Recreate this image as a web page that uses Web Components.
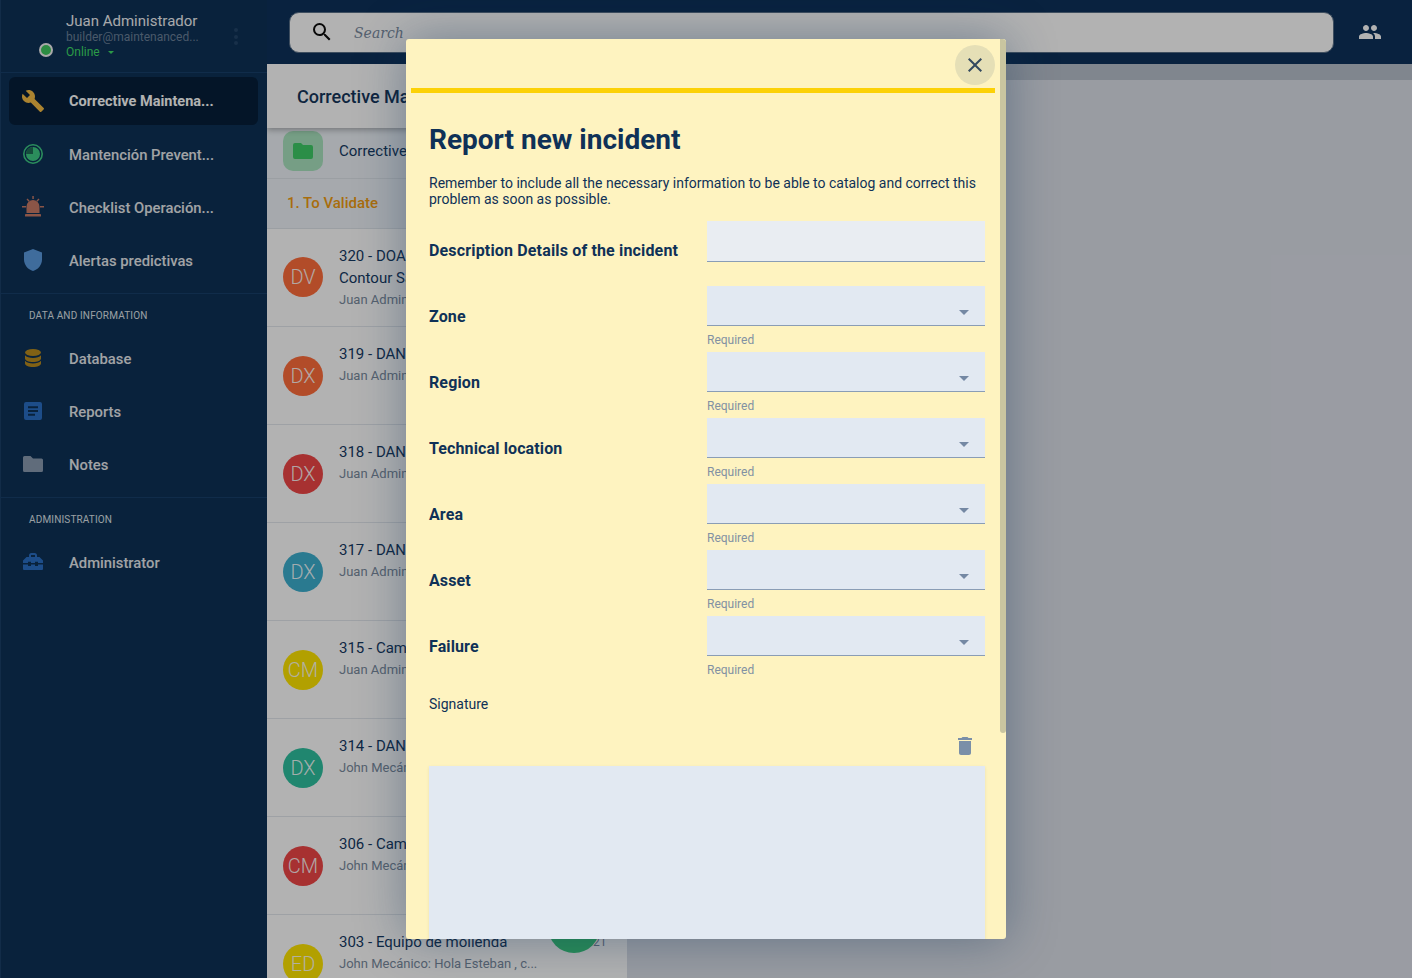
<!DOCTYPE html>
<html><head><meta charset="utf-8">
<style>
html,body{margin:0;height:100%;overflow:hidden;font-family:Roboto,sans-serif;background:#dce0e9}
</style></head><body>
<app-shell></app-shell>
<template id="nav-tpl"><style>
:host{display:flex;align-items:center;height:48px;margin:0 9px 5px 9px;border-radius:6px;padding-left:12px;color:#e7eaee;font:500 14.800px Roboto,sans-serif}
:host([active]){background:#061f3a;color:#fff;font:700 14.500px Roboto,sans-serif}
.i{width:24px;height:24px;flex:none;display:flex}
.t{margin-left:24px;margin-top:1px;white-space:nowrap}
::slotted(svg){width:24px;height:24px}
</style><span class="i"><slot name="icon"></slot></span><span class="t"><slot></slot></span></template>
<script>
const ICONS={
wrench:'<svg slot="icon" viewBox="0 0 24 24"><path fill="#f5bc45" d="M22.700 19l-9.100-9.100c.9-2.300.4-5-1.500-6.900-2-2-5-2.400-7.400-1.300L9 6 6 9 1.600 4.700C.4 7.100.9 10.100 2.900 12.100c1.900 1.900 4.600 2.400 6.900 1.500l9.100 9.100c.4.4 1 .4 1.400 0l2.300-2.300c.5-.4.5-1.100.1-1.400z"/></svg>',
clock:'<svg slot="icon" viewBox="0 0 24 24"><circle cx="12" cy="12" r="9.200" fill="none" stroke="#3ecb85" stroke-width="1.600"/><circle cx="12" cy="12" r="7" fill="#3ecb85"/><path fill="#1f6d55" d="M12 12V5A7 7 0 0 0 5 12z"/></svg>',
siren:'<svg slot="icon" viewBox="0 0 24 24"><g fill="#c87a66"><path d="M5.500 18v-6.500a6.500 6.500 0 0 1 13 0V18z"/><rect x="4" y="19" width="16" height="2.600" rx=".4"/><rect x="11.300" y="1" width="1.500" height="3"/><rect x="1" y="11" width="4" height="1.500"/><rect x="19" y="11" width="4" height="1.500"/><path d="M5.500 4.500l1-1 2.200 2.200-1 1zM18.500 4.500l-1-1-2.200 2.200 1 1z"/></g></svg>',
shield:'<svg slot="icon" viewBox="0 0 24 24"><path fill="#5b9be0" d="M12 1l9 3.400v7.100c0 5.300-3.800 10.100-9 11.500-5.200-1.400-9-6.200-9-11.500V4.400z"/></svg>',
db:'<svg slot="icon" viewBox="0 0 24 24"><g fill="#b98c1f"><ellipse cx="12" cy="6.500" rx="8" ry="3.500"/><path d="M4 9.300c1.400 1.700 4.700 2.700 8 2.700s6.600-1 8-2.700v3.200c0 1.900-3.600 3.500-8 3.500s-8-1.600-8-3.500z"/><path d="M4 14.800c1.400 1.700 4.700 2.700 8 2.700s6.600-1 8-2.700v2.700c0 1.900-3.600 3.500-8 3.500s-8-1.600-8-3.500z"/></g></svg>',
report:'<svg slot="icon" viewBox="0 0 24 24"><path fill-rule="evenodd" fill="#2a6fc4" d="M5 3h14a2 2 0 0 1 2 2v14a2 2 0 0 1-2 2H5a2 2 0 0 1-2-2V5a2 2 0 0 1 2-2zM7 7.300v2h10v-2zM7 11v2h10v-2zM7 14.700v2h7v-2z"/></svg>',
folder:'<svg slot="icon" viewBox="0 0 24 24"><path fill="#8a9bb0" d="M9.500 4H3.500A1.500 1.500 0 0 0 2 5.500v13A1.500 1.500 0 0 0 3.500 20h17a1.500 1.500 0 0 0 1.500-1.500V8a1.500 1.500 0 0 0-1.500-1.500h-8.500z"/></svg>',
tool:'<svg slot="icon" viewBox="0 0 24 24"><path fill="#2a6fc4" fill-rule="evenodd" d="M8 7V5.500A2.500 2.500 0 0 1 10.500 3h3A2.500 2.500 0 0 1 16 5.500V7h2.500L22 10.500V13h-5v-1.200h-3V13h-4v-1.200H7V13H2v-2.500L5.500 7zM10 7h4V5h-4zM2 14.500h5V16h3v-1.500h4V16h3v-1.500h5V19a1 1 0 0 1-1 1H3a1 1 0 0 1-1-1z"/></svg>'
};
class NavItem extends HTMLElement{constructor(){super();this.attachShadow({mode:'open'}).appendChild(document.getElementById('nav-tpl').content.cloneNode(true))}}
customElements.define('nav-item',NavItem);

class AppSidebar extends HTMLElement{constructor(){super();const s=this.attachShadow({mode:'open'});
const n=(ic,t,a)=>`<nav-item ${a?'active':''}>${ICONS[ic]}${t}</nav-item>`;
s.innerHTML=`<style>
:host{display:block;width:267px;flex:none;background:#0d3156;box-shadow:inset 1px 0 0 #1b4068;color:#fff;font-family:Roboto,sans-serif;height:100%}
.head{height:73px;box-sizing:border-box;border-bottom:1px solid #17406b;position:relative;padding:12px 0 0 66px}
.name{font:400 15px/18px Roboto,sans-serif;color:#f0f2f5}
.mail{font:400 12px/14px Roboto,sans-serif;color:#6b8099;white-space:nowrap}
.on{font:400 12px/16px Roboto,sans-serif;color:#3fdc66;margin-top:0}
.on svg{width:6px;height:3px;margin-left:8px;vertical-align:2px}
.dot{position:absolute;left:39px;top:43px;width:10px;height:10px;border:2px solid #f2f2f2;border-radius:50%;background:#3fc95f}
.more{position:absolute;left:234px;top:28px;display:flex;flex-direction:column;gap:2.500px}
.more i{width:4px;height:4px;border-radius:50%;background:#234569}
nav{padding-top:4px}
.sec{border-top:1px solid #17406b;padding-top:5px}
.lab{font:400 10px/14px Roboto,sans-serif;color:#dfe4ea;padding:10px 0 11px 29px;letter-spacing:.15px;text-transform:uppercase}
.sp{height:4px}
</style>
<div class="head"><div class="name">Juan Administrador</div><div class="mail">builder@maintenanced...</div><div class="on">Online<svg viewBox="0 0 8 4"><path fill="#3fdc66" d="M0 0h8L4 4z"/></svg></div><span class="dot"></span><div class="more"><i></i><i></i><i></i></div></div>
<nav>${n('wrench','Corrective Maintena...',1)}${n('clock','Mantención Prevent...')}${n('siren','Checklist Operación...')}${n('shield','Alertas predictivas')}
</nav>
<div class="sp"></div>
<div class="sec"><div class="lab">Data and information</div>${n('db','Database')}${n('report','Reports')}${n('folder','Notes')}</div>
<div class="sp"></div>
<div class="sec"><div class="lab">Administration</div>${n('tool','Administrator')}</div>`}}
customElements.define('app-sidebar',AppSidebar);

class TopBar extends HTMLElement{constructor(){super();this.attachShadow({mode:'open'}).innerHTML=`<style>
:host{display:flex;align-items:center;height:64px;background:#0e325b;padding:0 30px 0 22px;box-sizing:border-box;flex:none}
.s{flex:1;height:41px;box-sizing:border-box;background:#fff;border:1px solid #5a7088;border-radius:10px;display:flex;align-items:center;padding-left:20px}
.s svg{width:24px;height:24px;margin-top:-1px}
.s span{font:italic 400 14px "DejaVu Serif",serif;color:#7b8ba0;margin-left:20px;margin-top:1px}
.u{width:24px;height:24px;margin-left:24px;flex:none}
</style><div class="s"><svg viewBox="0 0 24 24"><path fill="#0c0c0c" d="M15.500 14h-.79l-.28-.27A6.470 6.470 0 0 0 16 9.500 6.500 6.500 0 1 0 9.500 16c1.610 0 3.090-.59 4.230-1.570l.27.28v.79l5 4.990L20.490 19l-4.990-5zm-6 0C7.010 14 5 11.990 5 9.500S7.010 5 9.500 5 14 7.010 14 9.500 11.990 14 9.500 14z"/></svg><span>Search</span></div>
<svg class="u" viewBox="0 0 24 24"><path fill="#fff" d="M16 11c1.660 0 2.990-1.340 2.990-3S17.660 5 16 5c-1.660 0-3 1.340-3 3s1.340 3 3 3zm-8 0c1.660 0 2.990-1.340 2.990-3S9.660 5 8 5C6.340 5 5 6.340 5 8s1.340 3 3 3zm0 2c-2.330 0-7 1.170-7 3.500V19h14v-2.500c0-2.330-4.670-3.500-7-3.500zm8 0c-.29 0-.62.020-.97.050 1.160.84 1.970 1.970 1.970 3.450V19h6v-2.500c0-2.330-4.670-3.500-7-3.500z"/></svg>`}}
customElements.define('top-bar',TopBar);

class TicketRow extends HTMLElement{constructor(){super();const a=n=>this.getAttribute(n);this.attachShadow({mode:'open'}).innerHTML=`<style>
:host{display:flex;flex:none;height:98px;box-sizing:border-box;border-bottom:1px solid #e3e7ec;padding:0 16px;position:relative;background:#fff}
.av{width:40px;height:40px;border-radius:50%;flex:none;margin-top:${a('t2')?28:29}px;display:flex;align-items:center;justify-content:center;color:rgba(255,255,255,.92);font:300 20px Roboto,sans-serif;background:${a('color')}}
.b{margin-left:16px;padding-top:19px;min-width:0;flex:1}
.t{font:400 15px/17px Roboto,sans-serif;color:#153a63;white-space:nowrap}
.t2{margin-top:5px}
.m{font:400 13px/16px Roboto,sans-serif;color:#7a8b9e;white-space:nowrap;margin-top:5px}
</style><span class="av">${a('init')}</span><div class="b"><div class="t">${a('title')}</div>${a('t2')?`<div class="t t2">${a('t2')}</div>`:''}<div class="m">${a('meta')}</div></div><slot></slot>`}}
customElements.define('ticket-row',TicketRow);

class TicketPanel extends HTMLElement{constructor(){super();this.attachShadow({mode:'open'}).innerHTML=`<style>
:host{display:flex;flex-direction:column;width:360px;flex:none;background:#fff;position:relative;isolation:isolate;height:100%;overflow:hidden;font-family:Roboto,sans-serif}
.h{height:64px;flex:none;box-shadow:0 2px 6px rgba(0,0,0,.3);position:relative;z-index:2;background:#fff;display:flex;align-items:center;padding-left:30px;font:500 18px Roboto,sans-serif;color:#15365b;white-space:nowrap}
.f{height:51px;flex:none;background:#eef3f8;box-sizing:border-box;border-bottom:1px solid #dfe4ea;display:flex;align-items:flex-start;padding:3px 0 0 16px;font:400 15px/40px Roboto,sans-serif;color:#153a63}
.f b{font-weight:400}
.ic{width:40px;height:40px;border-radius:10px;background:#a9e3bf;display:flex;align-items:center;justify-content:center;margin-right:16px}
.ic svg{width:24px;height:24px}
.st{height:50px;flex:none;background:#eef3f8;box-sizing:border-box;border-bottom:1px solid #dfe4ea;display:flex;align-items:center;padding:0 0 2px 20px;font:500 15px Roboto,sans-serif;color:#f29d12}
</style>
<div class="h">Corrective Maintenance</div>
<div class="f"><span class="ic"><svg viewBox="0 0 24 24"><path fill="#3ecc66" d="M10 4H4a2 2 0 0 0-2 2v12a2 2 0 0 0 2 2h16a2 2 0 0 0 2-2V8a2 2 0 0 0-2-2h-8z"/></svg></span><b>Corrective Maintenance</b></div>
<div class="st">1. To Validate</div>
<slot></slot>`}}
customElements.define('ticket-panel',TicketPanel);

class FabButton extends HTMLElement{constructor(){super();this.attachShadow({mode:'open'}).innerHTML=`<style>
:host{position:absolute;left:281px;top:-14px;width:52px;height:52px;border-radius:50%;background:#3ccc7e;display:block}
</style>`}}
customElements.define('fab-button',FabButton);

class FormRow extends HTMLElement{constructor(){super();this.attachShadow({mode:'open'}).innerHTML=`<style>
:host{display:grid;grid-template-columns:278px 278px;height:66px;color:#0f3157}
.l{font:700 16px/20px Roboto,sans-serif;align-self:start;margin-top:21px;white-space:nowrap;letter-spacing:.12px}
.f{height:40px;box-sizing:border-box;background:#e2e9f2;border-bottom:1px solid #8a9db5;position:relative}
.f svg{position:absolute;right:16px;top:24px;width:10px;height:5px}
.r{font:400 12px/14px Roboto,sans-serif;color:#8291a3;margin-top:7px}
</style><div class="l"><slot></slot></div><div><div class="f"><svg viewBox="0 0 10 5"><path fill="#7488a3" d="M0 0h10L5 5z"/></svg></div><div class="r">Required</div></div>`}}
customElements.define('form-row',FormRow);

class IncidentModal extends HTMLElement{constructor(){super();this.attachShadow({mode:'open'}).innerHTML=`<style>
:host{position:absolute;left:406px;top:39px;width:600px;height:900px;background:#fef3c0;border-radius:3px;box-shadow:0 0 50px rgba(15,49,87,.4);overflow:hidden;display:block;color:#0f3157;font-family:Roboto,sans-serif}
.top{height:49px;margin:0 11px 0 5px;border-bottom:5px solid #fcd106;position:relative}
.x{position:absolute;right:0;top:6px;width:40px;height:40px;border-radius:50%;background:#e5dfb6;display:flex;align-items:center;justify-content:center}
.x svg{width:24px;height:24px}
.c{padding:0 21px 0 23px}
h1{font:700 28px/34px Roboto,sans-serif;margin:0;padding-top:30px}
p{font:400 14px/16px Roboto,sans-serif;margin:18px 0 14px}
.first{display:grid;grid-template-columns:278px 278px;height:65px}
.first .l{font:700 16px/20px Roboto,sans-serif;margin-top:20px;white-space:nowrap;letter-spacing:.16px}
.first .f{height:41px;box-sizing:border-box;background:#e9edf2;border-bottom:1px solid #8a9db5}
.sig{font:400 14px/16px Roboto,sans-serif;margin-top:14px}
.tr{display:flex;justify-content:flex-end;padding:22px 8px 8px 0}
.tr svg{width:24px;height:24px;display:block}
.pad{height:400px;background:#e2e9f2;box-shadow:0 1px 3px rgba(0,0,0,.08)}
.sb{position:absolute;right:0;top:0;width:6px;height:694px;background:#c9c5a0;border-radius:0 3px 3px 3px}
</style>
<div class="top"><span class="x"><svg viewBox="0 0 24 24"><path fill="#33495f" d="M19 6.410L17.590 5 12 10.590 6.410 5 5 6.410 10.590 12 5 17.590 6.410 19 12 13.410 17.590 19 19 17.590 13.410 12z"/></svg></span></div>
<div class="c"><h1>Report new incident</h1>
<p>Remember to include all the necessary information to be able to catalog and correct this problem as soon as possible.</p>
<div class="first"><div class="l">Description Details of the incident</div><div class="f"></div></div>
<form-row>Zone</form-row><form-row>Region</form-row><form-row>Technical location</form-row><form-row>Area</form-row><form-row>Asset</form-row><form-row>Failure</form-row>
<div class="sig">Signature</div>
<div class="tr"><svg viewBox="0 0 24 24"><path fill="#7a8fa8" d="M6 19c0 1.100.9 2 2 2h8c1.100 0 2-.9 2-2V7H6v12zM19 4h-3.500l-1-1h-5l-1 1H5v2h14V4z"/></svg></div>
<div class="pad"></div></div>
<div class="sb"></div>`}}
customElements.define('incident-modal',IncidentModal);

class AppShell extends HTMLElement{constructor(){super();this.attachShadow({mode:'open'}).innerHTML=`<style>
:host{display:flex;width:100vw;height:100vh;position:relative;overflow:hidden}
.main{flex:1;display:flex;flex-direction:column;min-width:0}
.body{flex:1;display:flex;min-height:0}
.right{flex:1;display:flex;flex-direction:column;background:#dce0e9}
.bar{height:16px;background:#b8c1cc;flex:none}
.ov{position:absolute;inset:0;background:rgba(0,0,0,.3)}
.dt{position:absolute;left:326px;top:19px;font:400 12px/16px Roboto,sans-serif;color:#7a8b9e}
</style><app-sidebar></app-sidebar><div class="main"><top-bar></top-bar><div class="body"><ticket-panel>
<ticket-row init="DV" color="#ff6e3c" title="320 - DOA" t2="Contour Sander" meta="Juan Administrador"></ticket-row>
<ticket-row init="DX" color="#ff6e3c" title="319 - DANO" meta="Juan Administrador"></ticket-row>
<ticket-row init="DX" color="#f04747" title="318 - DANO" meta="Juan Administrador"></ticket-row>
<ticket-row init="DX" color="#3dafcf" title="317 - DANO" meta="Juan Administrador"></ticket-row>
<ticket-row init="CM" color="#ffe600" title="315 - Camión" meta="Juan Administrador"></ticket-row>
<ticket-row init="DX" color="#2fc0a0" title="314 - DANO" meta="John Mecánico"></ticket-row>
<ticket-row init="CM" color="#f04747" title="306 - Camión" meta="John Mecánico"></ticket-row>
<ticket-row init="ED" color="#ffe600" title="303 - Equipo de molienda" meta="John Mecánico: Hola Esteban , c..."><span class="dt">21</span><fab-button></fab-button></ticket-row>
</ticket-panel><div class="right"><div class="bar"></div></div></div></div><div class="ov"></div><incident-modal></incident-modal>`}}
customElements.define('app-shell',AppShell);
</script>
</body></html>
